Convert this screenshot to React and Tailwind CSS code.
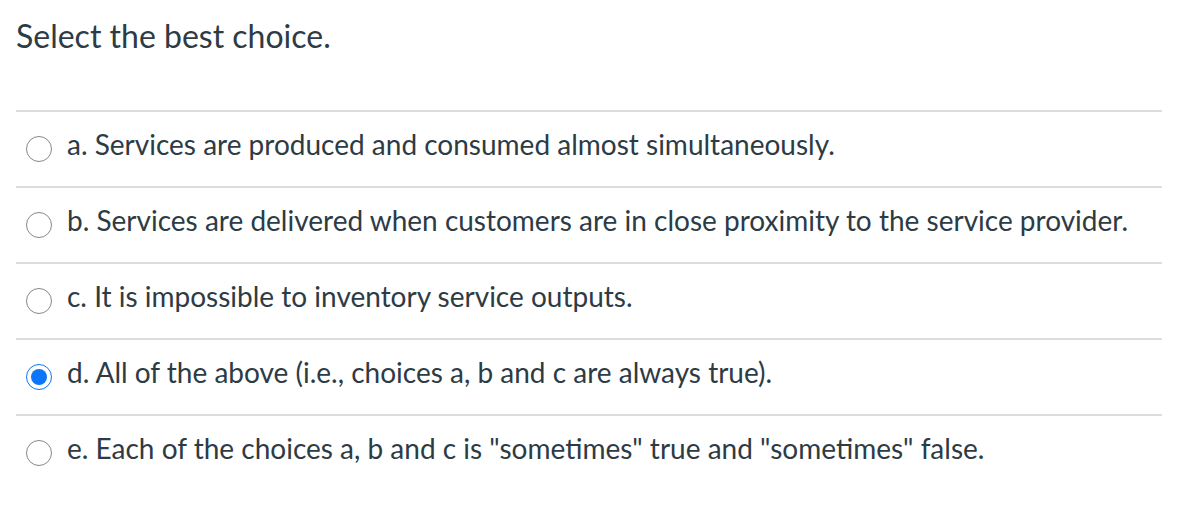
import React from "react";

const options = [
  "a. Services are produced and consumed almost simultaneously.",
  "b. Services are delivered when customers are in close proximity to the service provider.",
  "c. It is impossible to inventory service outputs.",
  "d. All of the above (i.e., choices a, b and c are always true).",
  "e. Each of the choices a, b and c is \"sometimes\" true and \"sometimes\" false.",
];

function Radio({ checked }) {
  if (checked) {
    return (
      <span className="flex h-[26px] w-[26px] shrink-0 items-center justify-center rounded-full border-[1.5px] border-[#0b76f9] bg-white">
        <span className="h-[16px] w-[16px] rounded-full bg-[#0b76f9]" />
      </span>
    );
  }
  return <span className="h-[26px] w-[26px] shrink-0 rounded-full border-[1.5px] border-[#888] bg-white" />;
}

export default function App() {
  return (
    <div className="min-h-[514px] w-[1178px] bg-white pl-4 pr-4 text-[#2d3b45]" style={{ fontFamily: "Lato, 'Open Sans', sans-serif" }}>
      <div className="flex h-[110px] items-start pt-[14px]">
        <h1 className="text-[32px] leading-[44px]">Select the best choice.</h1>
      </div>
      {options.map((o, i) => (
        <div key={i} className="w-[1146px] border-t-2 border-[#dcdcdc]">
          <div className="flex h-[74px] items-center gap-[15px] pl-[10px]">
            <Radio checked={i === 3} />
            <span className="pb-[10px] text-[28px] leading-none">{o}</span>
          </div>
        </div>
      ))}
    </div>
  );
}
